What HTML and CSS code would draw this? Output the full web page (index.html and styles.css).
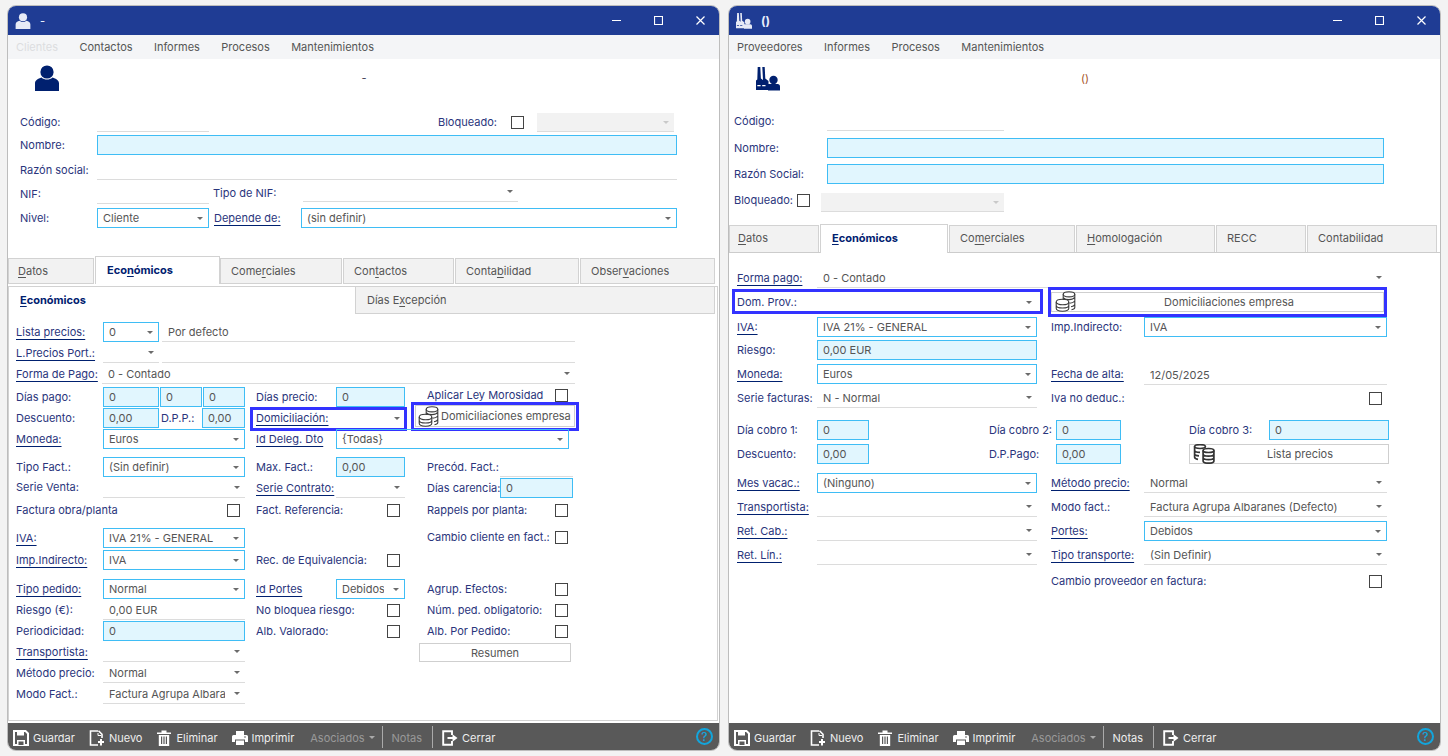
FILE: index.html
```html
<!DOCTYPE html>
<html lang="es">
<head>
<meta charset="utf-8">
<title>Clientes y Proveedores</title>
<link rel="stylesheet" href="styles.css">
</head>
<body>
<svg class="defs" aria-hidden="true">
  <symbol id="i-user" viewBox="0 0 24 26"><circle cx="12" cy="7" r="6.6"/><path d="M0 26V18.5C0 15.5 3 13.6 6.5 12.6 8 14 10 14.6 12 14.6S16 14 17.500 12.6C21 13.6 24 15.5 24 18.5V26Z"/></symbol>
  <symbol id="i-factory" viewBox="0 0 24 24"><path d="M1.700 0H4.300L4.900 11.500 7 13 6.300 0H8.700L9.300 11.500 12.500 14V23H0V13.500L1.300 12.500Z"/><circle cx="17.500" cy="13" r="4.200"/><path d="M12 17H21.500Q24 17 24 19.500V23.500H12Z"/><path class="wh" d="M1.300 18H4.600V19.300H1.300ZM6.200 18H9.500V19.300H6.200Z"/></symbol>
  <symbol id="i-coins" viewBox="0 0 21 21"><g fill="none" stroke="#3c3c3c" stroke-width="1.1"><ellipse cx="14" cy="3.300" rx="5.800" ry="2.600"/><path d="M8.200 3.300V9M19.800 3.300V16.500C19.800 17.600 18.500 18.400 16.500 18.700M8.500 6.800C9.500 8 11.500 8.600 14 8.600S18.800 7.800 19.800 6.400M14.500 12.200C16.500 12.200 18.800 11.400 19.800 10M16 15.700C17.800 15.400 19.200 14.700 19.800 13.400"/><ellipse cx="7.500" cy="11" rx="6.300" ry="2.800"/><path d="M1.200 11V17.300C1.200 19 4 20.200 7.500 20.200S13.800 19 13.800 17.300V11M1.200 14.200C1.200 15.800 4 17 7.500 17S13.800 15.800 13.800 14.200"/></g></symbol>
  <symbol id="i-coins2" viewBox="0 0 22 20"><g fill="none" stroke="#333" stroke-width="1.700"><ellipse cx="7" cy="2.600" rx="5.400" ry="1.900"/><path d="M1.600 2.600V13C1.600 14.200 3 15 5 15.300M1.600 6.200C1.600 7.400 4 8.300 7 8.300M1.600 9.800C1.600 11 3.500 11.800 6 11.900"/><ellipse cx="15.500" cy="6.500" rx="5.400" ry="2"/><path d="M10.100 6.500V17C10.100 18.300 12.500 19.200 15.500 19.200S20.900 18.300 20.900 17V6.500M10.100 10C10.100 11.300 12.500 12.200 15.500 12.200S20.900 11.300 20.900 10M10.100 13.500C10.100 14.800 12.500 15.700 15.500 15.700S20.900 14.800 20.900 13.500"/></g></symbol>
  <symbol id="i-save" viewBox="0 0 16 16"><path d="M1 1h11.500L15 3.500V15H1Z" fill="none" stroke="#fff" stroke-width="2"/><path d="M4 1h7v4.500H4ZM4 10h8v5H4Z" fill="#fff"/><path d="M5.500 11.500h5V15h-5Z" fill="#595959"/></symbol>
  <symbol id="i-new" viewBox="0 0 16 16"><path d="M9 1H1.500v14H9" fill="none" stroke="#fff" stroke-width="1.600"/><path d="M9.500 .8 13 4.300V8" fill="none" stroke="#fff" stroke-width="1.600"/><path d="M9 3v2.500h3" fill="none" stroke="#fff"/><path d="M11 9h2v2h2v2h-2v2.500h-2V13H9v-2h2Z" fill="#fff"/></symbol>
  <symbol id="i-trash" viewBox="0 0 16 16"><path d="M1 2.500h14v1.500H1ZM5.500 .5h5v2h-5Z" fill="#fff"/><path d="M2.800 5h10.400v11H2.800Z" fill="#fff"/><path d="M5 6.500h1.200V14H5ZM7.400 6.500h1.200V14H7.400ZM9.800 6.500H11V14H9.800Z" fill="#595959"/></symbol>
  <symbol id="i-print" viewBox="0 0 16 16"><path d="M4 1h8v4H4Z" fill="#fff"/><path d="M1.500 5h13A1.500 1.500 0 0 1 16 6.500V12h-3V9.500H3V12H0V6.500A1.500 1.500 0 0 1 1.500 5Z" fill="#fff"/><path d="M4 10.500h8V15H4Z" fill="#fff"/><circle cx="13" cy="7" r=".8" fill="#595959"/></symbol>
  <symbol id="i-exit" viewBox="0 0 16 16"><path d="M10 5V1.200H1.200v13.600H10V11" fill="none" stroke="#fff" stroke-width="1.900"/><path d="M5.500 7h5V4.300L15.500 8l-5 3.700V9h-5Z" fill="#fff"/></symbol>
</svg>

<main class="desk">
  <section class="win">
    <header class="tbar">
      <svg class="ti"><use href="#i-user"/></svg><span class="tt">-</span>
      <div class="wc">
        <svg class="wb" viewBox="0 0 9 9"><path d="M0 4.500h9"/></svg>
        <svg class="wb" viewBox="0 0 9 9"><path d="M.5.500h8v8h-8z"/></svg>
        <svg class="wb" viewBox="0 0 9 9"><path d="M.5.500l8 8M8.500.500l-8 8"/></svg>
      </div>
    </header>
    <nav class="menu"><span class="off">Clientes</span><span>Contactos</span><span>Informes</span><span>Procesos</span><span>Mantenimientos</span></nav>
    <div class="head"><svg class="hi"><use href="#i-user"/></svg><span class="ht">-</span></div>

    <div class="top1">
      <div class="fr t1 h23"><span class="lb t1-l">Código:</span><div class="ln t1-bc"></div><span class="lb t1-g">Bloqueado:</span><i class="cb t1-h"></i><div class="sel dis t1-k"><span></span><i class="ar"></i></div></div>
      <div class="fr t1 h25"><span class="lb t1-l">Nombre:</span><div class="inp t1-bm"></div></div>
      <div class="fr t1 h24"><span class="lb t1-l">Razón social:</span><div class="ln t1-bm"></div></div>
      <div class="fr t1 h24"><span class="lb t1-l">NIF:</span><div class="ln t1-bc"></div><span class="lb t1-d up1 ml-1">Tipo de NIF:</span><div class="sel ul t1-fi up2"><span></span><i class="ar"></i></div></div>
      <div class="fr t1 h48"><span class="lb t1-l">Nivel:</span><div class="sel bd t1-bc"><span>Cliente</span><i class="ar"></i></div><span class="lb t1-d"><u>Depende de:</u></span><div class="sel bd t1-em"><span>(sin definir)</span><i class="ar"></i></div></div>
    </div>

    <div class="tabs tabs1">
      <div class="tab"><u>D</u>atos</div>
      <div class="tab on">Eco<u>n</u>ómicos</div>
      <div class="tab">Come<u>r</u>ciales</div>
      <div class="tab">Con<u>t</u>actos</div>
      <div class="tab">Conta<u>b</u>ilidad</div>
      <div class="tab">Obser<u>v</u>aciones</div>
    </div>

    <div class="panel">
      <div class="itabs"><div class="itab on"><u>E</u>conómicos</div><div class="itab">Días E<u>x</u>cepción</div></div>

      <div class="fr p1 h21 first"><span class="lb col-l"><u>Lista precios:</u></span><div class="sel bd b-c"><span>0</span><i class="ar"></i></div><div class="ln txt d-p ml2">Por defecto</div></div>
      <div class="fr p1 h21"><span class="lb col-l"><u>L.Precios Port.:</u></span><div class="sel ul b-c"><span></span><i class="ar"></i></div><div class="ln d-p ml2"></div></div>
      <div class="fr p1 h23"><span class="lb col-l"><u>Forma de Pago:</u></span><div class="sel ul b-p ml-1"><span>0 - Contado</span><i class="ar"></i></div></div>
      <div class="fr p1 h21"><span class="lb col-l">Días pago:</span><div class="inp b-c">0</div><div class="inp d-e">0</div><div class="inp f-g">0</div><span class="lb h-i">Días precio:</span><div class="inp i-j">0</div><span class="lb k-m up2">Aplicar Ley Morosidad</span><i class="cb m-n up2"></i></div>
      <div class="fr p1 h21"><span class="lb col-l">Descuento:</span><div class="inp b-c">0,00</div><span class="lb d-e dpp">D.P.P.:</span><div class="inp e-g">0,00</div>
        <div class="sel ul noline h-j over"><span class="lbl"><u>Domiciliación:</u></span><i class="ar"></i><b class="mark m1"></b></div>
        <div class="btn k-p coinbtn over"><svg class="coin"><use href="#i-coins"/></svg><span>Domiciliaciones empresa</span><b class="mark m2"></b></div>
      </div>
      <div class="fr p1 h28"><span class="lb col-l"><u>Moneda:</u></span><div class="sel bd b-g"><span>Euros</span><i class="ar"></i></div><span class="lb h-i"><u>Id Deleg. Dto</u></span><div class="sel bd i-o mr4"><span>{Todas}</span><i class="ar"></i></div></div>
      <div class="fr p1 h21"><span class="lb col-l">Tipo Fact.:</span><div class="sel bd b-g"><span>(Sin definir)</span><i class="ar"></i></div><span class="lb h-i">Max. Fact.:</span><div class="inp i-j">0,00</div><span class="lb k-l">Precód. Fact.:</span><div class="ln l-o"></div></div>
      <div class="fr p1 h22"><span class="lb col-l up1">Serie Venta:</span><div class="sel ul b-g"><span></span><i class="ar"></i></div><span class="lb h-i"><u>Serie Contrato:</u></span><div class="sel ul i-j"><span></span><i class="ar"></i></div><span class="lb k-l">Días carencia:</span><div class="inp l-o">0</div></div>
      <div class="fr p1 h28"><span class="lb a-f">Factura obra/planta</span><i class="cb g-end"></i><span class="lb h-i">Fact. Referencia:</span><i class="cb j-end"></i><span class="lb k-m">Rappels por planta:</span><i class="cb m-n"></i></div>
      <div class="fr p1 h22"><span class="lb col-l"><u>IVA:</u></span><div class="sel bd b-g"><span>IVA 21% - GENERAL</span><i class="ar"></i></div><span class="lb k-m up1">Cambio cliente en fact.:</span><i class="cb m-n up1"></i></div>
      <div class="fr p1 h29"><span class="lb col-l"><u>Imp.Indirecto:</u></span><div class="sel bd b-g"><span>IVA</span><i class="ar"></i></div><span class="lb h-j">Rec. de Equivalencia:</span><i class="cb j-end"></i></div>
      <div class="fr p1 h21"><span class="lb col-l"><u>Tipo pedido:</u></span><div class="sel bd b-g"><span>Normal</span><i class="ar"></i></div><span class="lb h-i"><u>Id Portes</u></span><div class="sel bd i-j"><span>Debidos</span><i class="ar"></i></div><span class="lb k-m">Agrup. Efectos:</span><i class="cb m-n"></i></div>
      <div class="fr p1 h21"><span class="lb col-l">Riesgo (€):</span><div class="ln txt b-g">0,00 EUR</div><span class="lb h-j">No bloquea riesgo:</span><i class="cb j-end"></i><span class="lb k-m">Núm. ped. obligatorio:</span><i class="cb m-n"></i></div>
      <div class="fr p1 h21"><span class="lb col-l">Periodicidad:</span><div class="inp b-g">0</div><span class="lb h-i">Alb. Valorado:</span><i class="cb j-end"></i><span class="lb k-m">Alb. Por Pedido:</span><i class="cb m-n"></i></div>
      <div class="fr p1 h21"><span class="lb col-l"><u>Transportista:</u></span><div class="sel ul b-g"><span></span><i class="ar"></i></div><div class="btn k-o resumen">Resumen</div></div>
      <div class="fr p1 h21"><span class="lb col-l">Método precio:</span><div class="sel ul b-g"><span>Normal</span><i class="ar"></i></div></div>
      <div class="fr p1 h21"><span class="lb col-l">Modo Fact.:</span><div class="sel ul b-g"><span>Factura Agrupa Albaranes (Defecto)</span><i class="ar"></i></div></div>
    </div>

    <footer class="tool">
      <span class="tb"><svg class="tbi"><use href="#i-save"/></svg>Guardar</span>
      <span class="tb"><svg class="tbi"><use href="#i-new"/></svg>Nuevo</span>
      <span class="tb"><svg class="tbi"><use href="#i-trash"/></svg>Eliminar</span>
      <span class="tb"><svg class="tbi"><use href="#i-print"/></svg>Imprimir</span>
      <span class="tb dim asoc">Asociados<i class="tar"></i></span>
      <i class="sep"></i><span class="tb dim notas">Notas</span><i class="sep"></i>
      <span class="tb"><svg class="tbi"><use href="#i-exit"/></svg>Cerrar</span>
      <span class="help">?</span>
    </footer>
  </section>

  <section class="win">
    <header class="tbar">
      <svg class="ti"><use href="#i-factory"/></svg><span class="tt tb2">()</span>
      <div class="wc">
        <svg class="wb" viewBox="0 0 9 9"><path d="M0 4.500h9"/></svg>
        <svg class="wb" viewBox="0 0 9 9"><path d="M.5.500h8v8h-8z"/></svg>
        <svg class="wb" viewBox="0 0 9 9"><path d="M.5.500l8 8M8.500.500l-8 8"/></svg>
      </div>
    </header>
    <nav class="menu"><span>Proveedores</span><span>Informes</span><span>Procesos</span><span>Mantenimientos</span></nav>
    <div class="head head2"><svg class="hi"><use href="#i-factory"/></svg><span class="ht brown">()</span></div>

    <div class="top2">
      <div class="fr t2 h27"><span class="lb t2-ab">Código:</span><div class="ln t2-ef"></div></div>
      <div class="fr t2 h26"><span class="lb t2-ab">Nombre:</span><div class="inp t2-eg"></div></div>
      <div class="fr t2 h26"><span class="lb t2-ab">Razón Social:</span><div class="inp t2-eg"></div></div>
      <div class="fr t2 h34"><span class="lb t2-ab">Bloqueado:</span><i class="cb t2-bc"></i><div class="sel dis t2-df"><span></span><i class="ar"></i></div></div>
    </div>

    <div class="tabs tabs2">
      <div class="tab"><u>D</u>atos</div>
      <div class="tab on"><u>E</u>conómicos</div>
      <div class="tab">Co<u>m</u>erciales</div>
      <div class="tab"><u>H</u>omologación</div>
      <div class="tab">RECC</div>
      <div class="tab">Contabilidad</div>
    </div>

    <div class="pane2">
      <div class="fr g2 h24 first2"><span class="lb q-a"><u>Forma pago:</u></span><div class="sel ul q-be"><span>0 - Contado</span><i class="ar"></i></div></div>
      <div class="fr g2 h25 r-dom"><div class="sel ul noline q-ab over"><span class="lbl">Dom. Prov.:</span><i class="ar"></i><b class="mark m3"></b></div>
        <div class="btn q-de coinbtn2 over"><svg class="coin"><use href="#i-coins"/></svg><span>Domiciliaciones empresa</span><b class="mark m4"></b></div></div>
      <div class="fr g2 h23"><span class="lb q-a"><u>IVA:</u></span><div class="sel bd q-b"><span>IVA 21% - GENERAL</span><i class="ar"></i></div><span class="lb q-d">Imp.Indirecto:</span><div class="sel bd q-e"><span>IVA</span><i class="ar"></i></div></div>
      <div class="fr g2 h24"><span class="lb q-a">Riesgo:</span><div class="inp q-b">0,00 EUR</div></div>
      <div class="fr g2 h24"><span class="lb q-a"><u>Moneda:</u></span><div class="sel bd q-b"><span>Euros</span><i class="ar"></i></div><span class="lb q-d"><u>Fecha de alta:</u></span><div class="ln txt q-e dn1">12/05/2025</div></div>
      <div class="fr g2 h32"><span class="lb q-a">Serie facturas:</span><div class="sel ul q-b"><span>N - Normal</span><i class="ar"></i></div><span class="lb q-d">Iva no deduc.:</span><i class="cb q-e chk2"></i></div>
      <div class="fr g3 h24"><span class="lb w-a">Día cobro 1:</span><div class="inp w-b">0</div><span class="lb w-c">Día cobro 2:</span><div class="inp w-d">0</div><span class="lb w-e">Día cobro 3:</span><div class="inp w-f">0</div></div>
      <div class="fr g3 h29"><span class="lb w-a">Descuento:</span><div class="inp w-b">0,00</div><span class="lb w-c">D.P.Pago:</span><div class="inp w-d">0,00</div><div class="btn w-ef lista"><svg class="coin2"><use href="#i-coins2"/></svg><span>Lista precios</span></div></div>
      <div class="fr g2 h24"><span class="lb q-a"><u>Mes vacac.:</u></span><div class="sel bd q-b"><span>(Ninguno)</span><i class="ar"></i></div><span class="lb q-d"><u>Método precio:</u></span><div class="sel ul q-e"><span>Normal</span><i class="ar"></i></div></div>
      <div class="fr g2 h24"><span class="lb q-a"><u>Transportista:</u></span><div class="sel ul q-b"><span></span><i class="ar"></i></div><span class="lb q-d">Modo fact.:</span><div class="sel ul q-e"><span>Factura Agrupa Albaranes (Defecto)</span><i class="ar"></i></div></div>
      <div class="fr g2 h24"><span class="lb q-a"><u>Ret. Cab.:</u></span><div class="sel ul q-b"><span></span><i class="ar"></i></div><span class="lb q-d"><u>Portes:</u></span><div class="sel bd q-e"><span>Debidos</span><i class="ar"></i></div></div>
      <div class="fr g2 h26"><span class="lb q-a"><u>Ret. Lín.:</u></span><div class="sel ul q-b"><span></span><i class="ar"></i></div><span class="lb q-d"><u>Tipo transporte:</u></span><div class="sel ul q-e"><span>(Sin Definir)</span><i class="ar"></i></div></div>
      <div class="fr g2 h21"><span class="lb q-de">Cambio proveedor en factura:</span><i class="cb q-e chk2"></i></div>
    </div>

    <footer class="tool">
      <span class="tb"><svg class="tbi"><use href="#i-save"/></svg>Guardar</span>
      <span class="tb"><svg class="tbi"><use href="#i-new"/></svg>Nuevo</span>
      <span class="tb"><svg class="tbi"><use href="#i-trash"/></svg>Eliminar</span>
      <span class="tb"><svg class="tbi"><use href="#i-print"/></svg>Imprimir</span>
      <span class="tb dim asoc">Asociados<i class="tar"></i></span>
      <i class="sep"></i><span class="tb notas">Notas</span><i class="sep"></i>
      <span class="tb"><svg class="tbi"><use href="#i-exit"/></svg>Cerrar</span>
      <span class="help">?</span>
    </footer>
  </section>
</main>
</body>
</html>
```

FILE: styles.css
```css
* { box-sizing: border-box; }
html, body { margin: 0; height: 100%; }
body { background: #f3f3f3; font: 11px/20px Inter, "Liberation Sans", sans-serif; color: #555; overflow: hidden; }
.defs { display: none; }
.desk { display: flex; gap: 8px; padding: 5px 7px; height: 756px; }
.win { width: 713px; height: 746px; display: flex; flex-direction: column; background: #fff; border: 1px solid #bdbdbd; border-radius: 9px; overflow: hidden; }

.tbar { height: 29px; flex: none; background: #1f3c94; display: flex; align-items: center; color: #e8eefc; padding-left: 7px; }
.ti { width: 16px; height: 16px; fill: #e6eaf6; --wh: #1f3c94; }
.tt { margin-left: 9px; font-weight: 500; }
.tb2 { font-weight: 700; font-size: 12px; }
.wc { margin-left: auto; display: flex; gap: 33px; padding-right: 14px; }
.wb { width: 9px; height: 9px; fill: none; stroke: #fff; stroke-width: 1.200; display: block; }

.menu { height: 24px; flex: none; background: #f4f5f7; display: flex; gap: 21.4px; padding-left: 8px; line-height: 24px; color: #555; }
.menu .off { color: #dcdde0; }

.head { height: 53px; flex: none; display: grid; grid-template-columns: 1fr auto 1fr; padding-top: 6px; }
.hi { width: 24px; height: 26px; fill: #00206f; --wh: #fff; margin-left: 27px; }
.wh { fill: var(--wh); }
.ht { padding-top: 3px; color: #445; margin-left: 1px; }
.brown { color: #a5531f; }
.head2 { height: 52px; padding-top: 7px; }
.head2 .ht { padding-top: 2px; }

.fr { display: grid; align-items: start; }
.fr > * { grid-row: 1; }
.lb, .lbl { color: #2a357c; white-space: nowrap; }
.lb { height: 20px; }
.lb u, .lbl u { text-decoration: underline; text-underline-offset: 3px; text-decoration-color: #00206f; color: #2a357c; }
.tab u, .itab u { text-decoration: underline; text-underline-offset: 2px; }

.inp, .sel, .ln, .btn { height: 20px; min-width: 0; }
.inp { background: #e1f6fe; border: 1px solid #3fbdf5; padding-left: 5px; line-height: 18px; color: #555; }
.ln { border-bottom: 1px solid #dcdcdc; }
.txt { padding-left: 6px; }
.dn1 { margin-top: 1px; }
.sel { display: flex; align-items: center; padding-right: 5px; position: relative; }
.sel > span { flex: 1; overflow: hidden; white-space: nowrap; padding-left: 6px; min-width: 0; margin-right: 9px; }
.sel.bd { border: 1px solid #3fbdf5; }
.sel.bd > span { padding-left: 5px; }
.sel.ul { border-bottom: 1px solid #dcdcdc; }
.sel.noline { border-bottom: 0; }
.sel.dis { background: #f2f2f2; border-bottom: 1px solid #dcdcdc; height: 19px; }
.ar { flex: none; width: 0; height: 0; border: 3.500px solid transparent; border-top: 3.500px solid #6b6b6b; border-bottom: 0; }
.dis .ar { border-top-color: #c9c9c9; }
.cb { display: block; width: 13px; height: 13px; border: 1px solid #444; background: #fff; margin-top: 4px; }
.btn { border: 1px solid #cfcfcf; display: flex; align-items: center; justify-content: center; color: #555; background: #fff; position: relative; }
.over { position: relative; }
.mark { position: absolute; border: 3px solid #3333ff; pointer-events: none; }

.up1 { margin-top: -1px; }
.up2 { margin-top: -2px; }
i.cb.up1 { margin-top: 3px; }
i.cb.up2 { margin-top: 2px; }

.h21 { height: 21px; } .h22 { height: 22px; } .h23 { height: 23px; } .h24 { height: 24px; } .h25 { height: 25px; }
.h26 { height: 26px; } .h27 { height: 27px; } .h28 { height: 28px; } .h29 { height: 29px; } .h32 { height: 32px; } .h34 { height: 34px; } .h48 { height: 48px; }

/* Window 1 header form */
.top1 { padding-left: 12px; flex: none; }
.t1 { grid-template-columns: [a] 77px [b] 112px [c] 5px [d] 87px [e] 2px [f] 135px [g] 73px [h] 7px [i] 6px [j] 13px [k] 137px [l] 3px [m]; }
.t1-l { grid-column: a / b; }
.t1-bc { grid-column: b / c; }
.t1-bm { grid-column: b / m; }
.t1-d { grid-column: d / e; }
.t1-g { grid-column: g / h; }
.t1-h { grid-column: h / j; }
.t1-k { grid-column: k / l; margin-top: 1px; }
.t1-fi { grid-column: f / i; }
.t1-em { grid-column: e / m; }

/* Tabs */
.tabs { display: grid; height: 29px; flex: none; }
.tabs1 { grid-template-columns: 87px 125px 123px 112px 125px 136px; }
.tabs2 { grid-template-columns: 91px 129px 127px 140px 91px 131px; border-bottom: 1px solid #ccc; }
.tab { background: #f2f2f2; border: 1px solid #d2d2d2; border-bottom: 0; margin: 2px 1px 0 0; padding-left: 10px; line-height: 24px; color: #555; height: 26px; }
.tabs1 .tab { border-bottom: 1px solid #d2d2d2; }
.tabs1 .tab:first-child { padding-left: 9px; }
.tabs2 .tab { margin-top: 1px; height: 27px; line-height: 25px; }
.tabs2 .tab:first-child { padding-left: 8px; }
.tab.on { background: #fff; margin: 0 0 -1px 0; height: 29px; padding-left: 11px; line-height: 27px; border-bottom: 0; font-weight: 700; color: #00206f; border-color: #d2d2d2; position: relative; }
.tabs2 .tab.on { height: 29px; margin-top: 0; margin-right: 1px; line-height: 27px; }
.tabs1 .tab.on { height: 28px; }

/* Window 1 inner panel */
.panel { flex: 1; margin: 1px 1px 2px 0; border: 1px solid #d2d2d2; min-height: 0; }
.itabs { display: grid; grid-template-columns: 346px 360px; height: 27px; }
.itab { padding-left: 11px; line-height: 26px; font-weight: 700; color: #00206f; }
.itab:last-child { background: #f2f2f2; border: 1px solid #d2d2d2; border-top: 0; font-weight: 400; color: #555; }
.p1 { padding-left: 7px; grid-template-columns: [a] 87px [b] 56px [c] 1px [d] 42px [e] 1px [f] 42px [g] 11px [h] 80px [i] 69px [j] 22px [k] 73px [l] 55px [m] 13px [n] 5px [o] 2px [p]; }
.first { margin-top: 8px; }
.col-l { grid-column: a / b; }
.a-f { grid-column: a / f; }
.b-c { grid-column: b / c; }
.b-g { grid-column: b / g; }
.b-p { grid-column: b / p; }
.d-e { grid-column: d / e; }
.d-p { grid-column: d / p; }
.e-g { grid-column: e / g; }
.f-g { grid-column: f / g; }
.h-i { grid-column: h / i; }
.h-j { grid-column: h / j; }
.i-j { grid-column: i / j; }
.i-o { grid-column: i / o; }
.k-l { grid-column: k / l; }
.k-m { grid-column: k / m; }
.k-o { grid-column: k / o; }
.k-p { grid-column: k / p; }
.l-o { grid-column: l / o; }
.m-n { grid-column: m / n; }
.g-end { grid-column: f / g; justify-self: end; margin-right: 5px; }
.j-end { grid-column: i / j; justify-self: end; margin-right: 5px; }
.ml2 { margin-left: 2px; }
.ml-1 { margin-left: -1px; }
.mr4 { margin-right: 4px; }
.dpp { padding-left: 1px; }
.coinbtn { margin: -3px 0 0 -12px; height: 22px; justify-content: flex-start; padding-left: 2px; gap: 2px; }
.coin { width: 21px; height: 21px; flex: none; }
.m1 { left: -6px; right: -2px; top: -1px; bottom: -3px; }
.m2 { left: -5px; right: -5px; top: -4px; bottom: -5px; }
.resumen { margin: 1px 2px 0 -8px; height: 19px; }
.sel > .lbl { padding-left: 0; overflow: visible; }

/* Toolbar */
.tool { height: 27px; flex: none; background: #595959; display: flex; align-items: center; gap: 14px; padding: 2px 6px 0 5px; color: #eee; }
.tb { display: flex; align-items: center; gap: 4px; white-space: nowrap; }
.tbi { width: 16px; height: 16px; flex: none; }
.dim { color: #999; }
.asoc { margin: 0 -2px 0 2px; }
.notas { margin-right: 1px; }
.tar { display: block; width: 0; height: 0; border: 3px solid transparent; border-top-color: #aaa; border-bottom: 0; }
.sep { width: 1px; height: 22px; background: #aaa; margin: -2px -5px 0; }
.help { margin: -2px 0 0 auto; width: 17px; height: 17px; border: 2px solid #12a5dc; border-radius: 50%; color: #12a5dc; text-align: center; line-height: 13px; font-size: 12px; font-weight: 500; }

/* Window 2 */
.top2 { padding-left: 5px; flex: none; }
.t2 { grid-template-columns: [a] 63px [b] 13px [c] 11px [d] 6px [e] 177px [f] 380px [g]; }
.t2-ab { grid-column: a / b; }
.t2-bc { grid-column: b / c; }
.t2-df { grid-column: d / f; margin-top: 3px; }
.t2-ef { grid-column: e / f; }
.t2-eg { grid-column: e / g; }
.pane2 { flex: 1; min-height: 0; }
.first2 { margin-top: 15px; }
.g2 { padding-left: 8px; grid-template-columns: [a] 80px [b] 220px [c] 14px [d] 93px [e] 243px [f]; }
.q-a { grid-column: a / b; }
.q-ab { grid-column: a / c; }
.q-b { grid-column: b / c; }
.q-be { grid-column: b / f; }
.q-d { grid-column: d / e; }
.q-de { grid-column: d / f; }
.q-e { grid-column: e / f; }
.chk2 { justify-self: end; margin-right: 5px; }
.coinbtn2 { justify-content: center; padding-left: 23px; margin-right: 3px; }
.coinbtn2 .coin { position: absolute; left: 3px; top: -2px; }
.m3 { left: -5px; right: -6px; top: -3px; bottom: -2px; }
.m4 { left: -4px; right: -4px; top: -6px; bottom: -6px; }
.g3 { padding-left: 8px; grid-template-columns: [a] 80px [b] 52px [c] 120px [d] 67px [e] 65px [f] 68px [g] 80px [h] 120px [i]; }
.w-a { grid-column: a / b; }
.w-b { grid-column: b / c; }
.w-c { grid-column: d / e; }
.w-d { grid-column: e / f; }
.w-e { grid-column: g / h; }
.w-f { grid-column: h / i; }
.w-ef { grid-column: g / i; }
.lista { padding-left: 22px; }
.lista .coin2 { position: absolute; left: 3px; top: -1px; width: 22px; height: 20px; }
```
